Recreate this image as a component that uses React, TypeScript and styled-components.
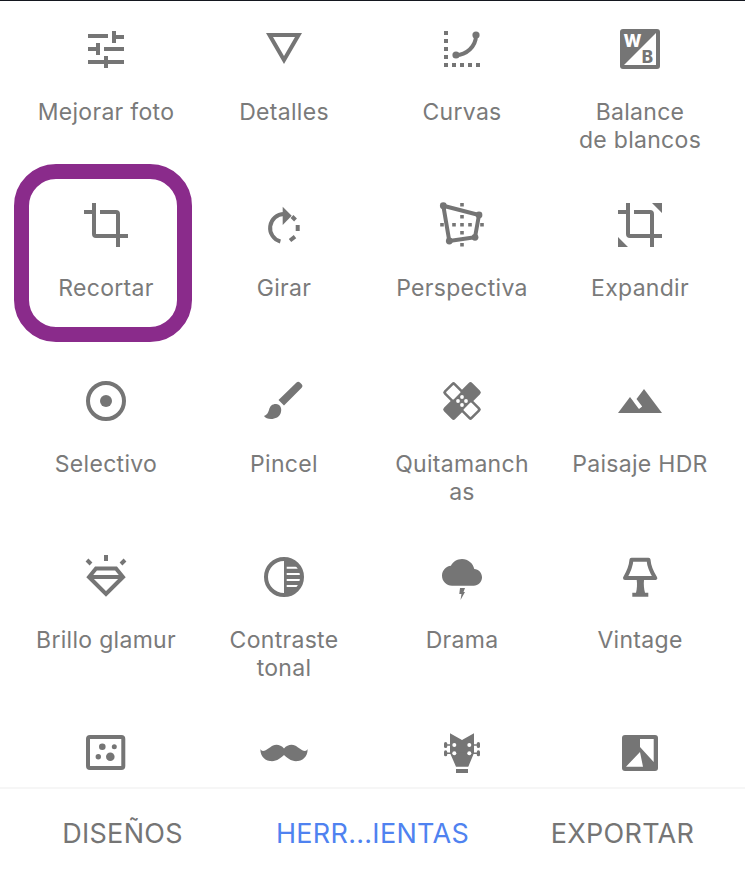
import React from "react";
import styled, { createGlobalStyle } from "styled-components";

const GlobalStyle = createGlobalStyle`
  html, body {
    margin: 0;
    padding: 0;
    background: #fff;
  }
  body {
    font-family: Inter, "Liberation Sans", sans-serif;
  }
`;

const Screen = styled.div`
  height: 879px;
  display: flex;
  flex-direction: column;
  overflow: hidden;
  background: #fff;
  border-top: 1px solid #14171f;
  box-sizing: border-box;
`;

const ToolGrid = styled.div`
  flex: 1;
  min-height: 0;
  overflow: hidden;
  display: grid;
  grid-template-columns: repeat(4, 178px);
  grid-auto-rows: 176px;
  padding-left: 17px;
`;

const ToolCell = styled.div<{ $selected?: boolean }>`
  position: relative;
  display: flex;
  flex-direction: column;
  align-items: center;
  padding-top: 24px;
  box-sizing: border-box;

  ${(p) =>
    p.$selected &&
    `
    &::after {
      content: "";
      position: absolute;
      top: -13px;
      left: -3px;
      width: 178px;
      height: 178px;
      box-sizing: border-box;
      border: 15px solid #8a2b8b;
      border-radius: 42px;
    }
  `}
`;

const ToolIcon = styled.svg`
  width: 48px;
  height: 48px;
  flex: none;
  fill: #757575;
`;

const ToolLabel = styled.div`
  margin-top: 25px;
  font-size: 23px;
  line-height: 28px;
  letter-spacing: 0.3px;
  color: #7a7a7a;
  text-align: center;
  white-space: pre-line;
`;

const TabBar = styled.div`
  flex: none;
  height: 92px;
  box-sizing: border-box;
  border-top: 2px solid #f6f6f6;
  display: grid;
  grid-template-columns: repeat(3, 250px);
  justify-content: center;
  align-items: center;
`;

const Tab = styled.div<{ $active?: boolean }>`
  font-size: 27px;
  line-height: 30px;
  letter-spacing: 0.3px;
  text-align: center;
  color: ${(p) => (p.$active ? "#4f82f0" : "#757575")};
`;

const Line = styled.path`
  fill: none;
  stroke: #757575;
  stroke-width: 4;
`;

const IconText = styled.text`
  font-family: Inter, "Liberation Sans", sans-serif;
  font-weight: 800;
  font-size: 17px;
  text-anchor: middle;
`;

const cropPaths = (
  <>
    <Line d="M2 11H12M12 2V33a2 2 0 0 0 2 2H46M18 11H34a2 2 0 0 1 2 2V46" />
  </>
);

const icons: Record<string, React.ReactNode> = {
  tune: (
    <path d="M6 9h20v4H6zM30 6h4v4h8v4h-8v4h-4zM6 22h8v-4h4v12h-4v-4H6zM22 22h20v4H22zM6 35h16v4H6zM22 31h4v4h16v4H26v4h-4z" />
  ),
  details: <path fillRule="evenodd" d="M6 8H42L24 39ZM13 12 24 31 35 12Z" />,
  curves: (
    <>
      <path d="M6 6h4v4H6zM6 14h4v4H6zM6 22h4v4H6zM6 30h4v4H6zM6 38h4v4H6zM14 38h4v4h-4zM22 38h4v4h-4zM30 38h4v4h-4zM38 38h4v4h-4z" />
      <Line d="M18 30C28 30 38 22 38 10" />
      <circle cx="18" cy="30" r="3.6" />
      <circle cx="38" cy="10" r="3.6" />
    </>
  ),
  whiteBalance: (
    <>
      <rect x="4" y="4" width="40" height="40" rx="3" />
      <path d="M40 8V40H8Z" fill="#fff" />
      <IconText x="16.500" y="22" fill="#fff">W</IconText>
      <IconText x="31.500" y="38">B</IconText>
    </>
  ),
  crop: cropPaths,
  rotate: (
    <>
      <Line d="M24 13A14 14 0 0 0 20.4 40.5M32 15.5 35.5 19M37.7 24.1V29.9M35 35.6 30 39.5" />
      <path d="M22.7 5.7 31.7 14.7 22.7 24Z" />
    </>
  ),
  perspective: (
    <>
      <path d="M22.2 2h3.6v3.6h-3.6zM22.2 14h3.6v3.6h-3.6zM22.2 22h3.6v3.6h-3.6zM22.2 30h3.6v3.6h-3.6zM22.2 42h3.6v3.6h-3.6zM2.2 22h3.6v3.6H2.2zM14.2 22h3.6v3.6h-3.6zM30.2 22h3.6v3.6h-3.6zM42.2 22h3.6v3.6h-3.6z" />
      <Line d="M5.3 4.7 41 14 37 36.3 11.3 40Z" />
      <circle cx="5.3" cy="4.7" r="3.4" />
      <circle cx="41" cy="14" r="3.4" />
      <circle cx="37" cy="36.3" r="3.4" />
      <circle cx="11.3" cy="40" r="3.4" />
    </>
  ),
  expand: (
    <>
      {cropPaths}
      <path d="M36 2H46V12ZM2 36 12 46H2Z" />
    </>
  ),
  selective: (
    <>
      <Line d="M42 24A18 18 0 1 1 6 24A18 18 0 1 1 42 24Z" />
      <circle cx="24" cy="24" r="6" />
    </>
  ),
  brush: (
    <>
      <path d="M36.5 5.5a2.4 2.4 0 0 1 3.4 0l1.8 1.8a2.4 2.4 0 0 1 0 3.4L24 28.5 18.500 23Z" />
      <path d="M16 27C20 27 22 31 21 35C20 40 15 42 11 42C8 42 5 41 4 39C7 38 8 36 9 33C10 29 12 27 16 27Z" />
    </>
  ),
  healing: (
    <>
      <g transform="rotate(45 24 24)">
        <rect x="16" y="4" width="16" height="40" rx="2.500" />
      </g>
      <g transform="rotate(-45 24 24)">
        <rect x="16" y="4" width="16" height="40" rx="2.500" />
        <rect x="18.500" y="6.500" width="11" height="10.500" rx="1" fill="#fff" />
        <rect x="18.500" y="31" width="11" height="10.500" rx="1" fill="#fff" />
      </g>
      <circle cx="24" cy="20" r="1.900" fill="#fff" />
      <circle cx="20" cy="24" r="1.900" fill="#fff" />
      <circle cx="28" cy="24" r="1.900" fill="#fff" />
      <circle cx="24" cy="28" r="1.900" fill="#fff" />
    </>
  ),
  landscape: (
    <path
      transform="scale(2)"
      d="M14 6l-3.75 5 2.85 3.8-1.6 1.2C9.81 13.750 7 10 7 10l-6 8h22L14 6z"
    />
  ),
  glamour: (
    <>
      <path d="M22 2h4v6h-4zM3.600 8.400 6.400 5.600 10.400 9.600 7.600 12.400ZM44.400 8.400 41.600 5.600 37.600 9.600 40.400 12.400Z" />
      <Line d="M14 15.500H34L41 24 24 41 7 24ZM7 24H41" />
    </>
  ),
  tonal: (
    <>
      <path d="M24 6A18 18 0 0 1 24 42Z" />
      <path d="M26.700 13.700H41V15.700H26.700zM26.700 20H42V22H26.700zM26.700 26H42V28H26.700zM26.700 32H41V34H26.700z" fill="#fff" />
      <Line d="M42 24A18 18 0 1 1 6 24A18 18 0 1 1 42 24Z" />
    </>
  ),
  drama: (
    <>
      <path
        transform="translate(4 -0.67) scale(1.667)"
        d="M19.350 10.040C18.670 6.590 15.640 4 12 4 9.110 4 6.600 5.640 5.350 8.040 2.340 8.360 0 10.910 0 14c0 3.310 2.690 6 6 6h13c2.760 0 5-2.240 5-5 0-2.640-2.050-4.780-4.650-4.960z"
      />
      <path d="M22 35H27L25.500 39H27L22.500 47 23.500 41H21.300Z" />
    </>
  ),
  vintage: (
    <>
      <Line strokeLinejoin="round" d="M15.500 6.700H32.500C33 13 36 20 39.300 25H9C12 20 15 13 15.500 6.700Z" />
      <path d="M20.700 27H28C27.500 31 28 36 29 39.700H32.300V43.700H16.300V39.700H20C21 36 21.300 31 20.700 27Z" />
    </>
  ),
  grain: (
    <>
      <rect x="6" y="8" width="35.300" height="31" rx="2" fill="none" stroke="#757575" strokeWidth="4" />
      <circle cx="20.300" cy="17.700" r="3.300" />
      <circle cx="32.300" cy="17.700" r="2.500" />
      <circle cx="16.300" cy="27.700" r="2.700" />
      <circle cx="28.300" cy="27.700" r="4.300" />
    </>
  ),
  retro: (
    <path d="M24 19.500C21 15.500 16 15 13 16.500C9 18.500 7 21.500 3 22C2 22 1 21 .5 20C0 25 3 31 10 32C16 33 21 29 24 26C27 29 32 33 38 32C45 31 48 25 47.500 20C47 21 46 22 45 22C41 21.500 39 18.500 35 16.500C32 15 27 15.500 24 19.500Z" />
  ),
  grunge: (
    <>
      <path d="M12 4.300 24 11 36 4.300V24L30.300 37.700H18L12 24Z" />
      <path d="M18 40H30V44H18z" />
      <path d="M7 15.200H41V16.800H7zM7 23.500H41V25.100H7z" />
      <rect x="6" y="13" width="3.200" height="6" rx="1.600" />
      <rect x="6" y="21.300" width="3.200" height="6" rx="1.600" />
      <rect x="38.800" y="13" width="3.200" height="6" rx="1.600" />
      <rect x="38.800" y="21.300" width="3.200" height="6" rx="1.600" />
      <circle cx="16.300" cy="16" r="2" fill="#fff" />
      <circle cx="31.300" cy="16" r="2" fill="#fff" />
      <circle cx="16.300" cy="24.300" r="2" fill="#fff" />
      <circle cx="31.300" cy="24.300" r="2" fill="#fff" />
    </>
  ),
  blackWhite: (
    <>
      <rect x="6" y="6" width="36" height="36" rx="3" />
      <path d="M24 10H37.700V33L24 18ZM10 37.700 24 23 27 37.700Z" fill="#fff" />
    </>
  ),
};

const tools = [
  { icon: "tune", label: "Mejorar foto" },
  { icon: "details", label: "Detalles" },
  { icon: "curves", label: "Curvas" },
  { icon: "whiteBalance", label: "Balance\nde blancos" },
  { icon: "crop", label: "Recortar", selected: true },
  { icon: "rotate", label: "Girar" },
  { icon: "perspective", label: "Perspectiva" },
  { icon: "expand", label: "Expandir" },
  { icon: "selective", label: "Selectivo" },
  { icon: "brush", label: "Pincel" },
  { icon: "healing", label: "Quitamanch\nas" },
  { icon: "landscape", label: "Paisaje HDR" },
  { icon: "glamour", label: "Brillo glamur" },
  { icon: "tonal", label: "Contraste\ntonal" },
  { icon: "drama", label: "Drama" },
  { icon: "vintage", label: "Vintage" },
  { icon: "grain" },
  { icon: "retro" },
  { icon: "grunge" },
  { icon: "blackWhite" },
];

const App = () => {
  return (
    <>
      <GlobalStyle />
      <Screen>
        <ToolGrid>
          {tools.map((tool) => (
            <ToolCell key={tool.icon} $selected={tool.selected}>
              <ToolIcon viewBox="0 0 48 48">{icons[tool.icon]}</ToolIcon>
              {tool.label && <ToolLabel>{tool.label}</ToolLabel>}
            </ToolCell>
          ))}
        </ToolGrid>
        <TabBar>
          <Tab>DISEÑOS</Tab>
          <Tab $active>HERR...IENTAS</Tab>
          <Tab>EXPORTAR</Tab>
        </TabBar>
      </Screen>
    </>
  );
};

export default App;
